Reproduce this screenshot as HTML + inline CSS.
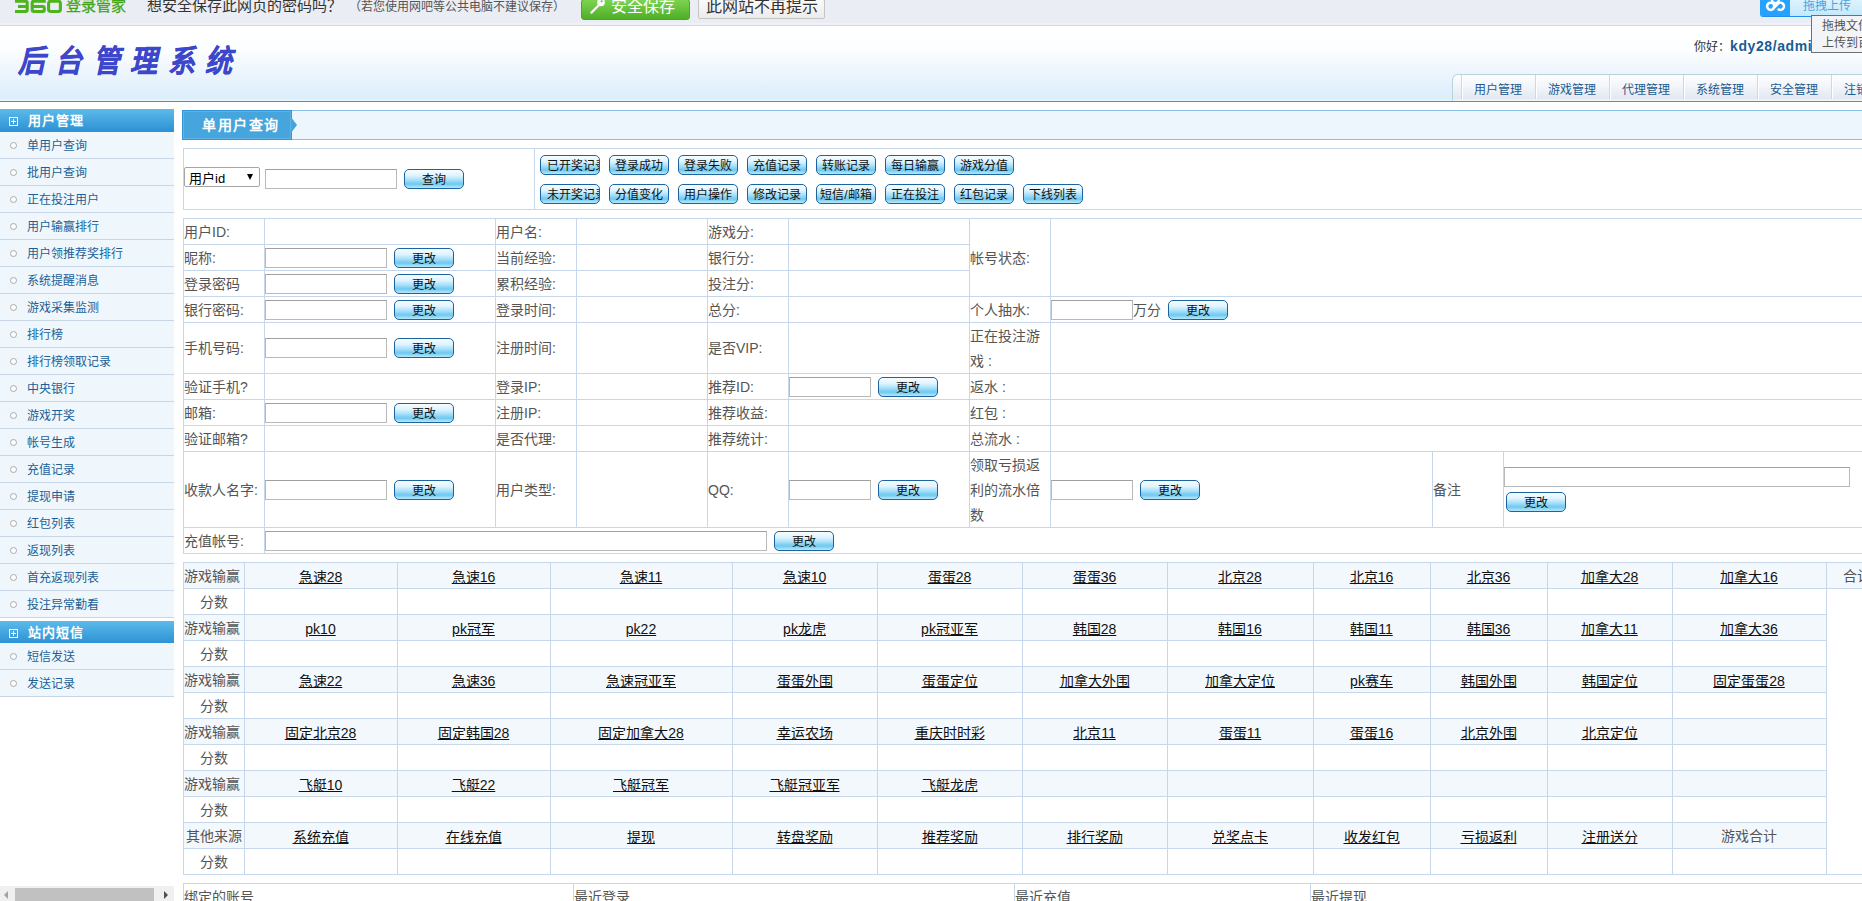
<!DOCTYPE html><html lang="zh-CN"><head><meta charset="utf-8"><style>*{box-sizing:border-box}
html,body{margin:0;padding:0}
body{width:1862px;height:901px;overflow:hidden;position:relative;background:#fff;font-family:"Liberation Sans",sans-serif;font-size:14px;color:#555}
.abs{position:absolute}
#bar{left:0;top:0;width:1862px;height:26px;background:linear-gradient(#eaedf4 0%,#eaedf4 90%,#f0f2f7 92%,#f0f2f7 100%);border-bottom:1px solid #cfd8ea}
#logo360{left:14px;top:-7px;font-size:22px;font-weight:bold;color:#4cb31d;line-height:22px;letter-spacing:-1px}
#logo360b{left:66px;top:-3px;font-size:15px;color:#44a516;line-height:18px;-webkit-text-stroke:0.3px #44a516}
#q1{left:147px;top:-3px;font-size:15px;color:#333;line-height:18px}
#q2{left:349px;top:-1px;font-size:12px;color:#555;line-height:16px}
#gbtn{left:581px;top:-1px;width:109px;height:21px;border-radius:3px;background:linear-gradient(#7dd350,#4fae26);border:1px solid #4ea52c}
#gbtn span{position:absolute;left:29px;top:-3px;font-size:16px;line-height:20px;color:#fff}
#wbtn{left:698px;top:-1px;width:127px;height:20px;border-radius:2px;background:linear-gradient(#fafafa,#ececec);border:1px solid #c4c4c4;font-size:16px;line-height:14px;color:#333;text-align:center;padding-top:0}
#upl{left:1760px;top:-1px;width:110px;height:18px;border-radius:0 0 0 3px;background:linear-gradient(#def3fe,#c3e8fb);border-bottom:1px solid #1e90f5;overflow:hidden}
#uplic{position:absolute;left:0;top:0;width:30px;height:18px;background:#24a2fd}
#upl span{position:absolute;left:43px;top:0px;font-size:12px;line-height:14px;color:#4aa3df}
#tip{z-index:5;left:1811px;top:15px;width:60px;height:38px;background:#f3f4f7;border:1px solid #6f6f6f;font-size:12px;line-height:17px;color:#555;padding:2px 0 0 10px;white-space:nowrap;overflow:hidden}
#hdr{left:0;top:26px;width:1862px;height:76px;background:linear-gradient(#ffffff 0%,#fdfeff 30%,#f0f7fd 55%,#e4f1fc 80%,#dcedfa 97%,#e9f5fc 98.5%);border-bottom:1px solid #3f95d2}
#sys{left:18px;top:42px;font-size:31px;line-height:40px;font-weight:bold;color:#3d47cb;letter-spacing:12px;font-style:italic;-webkit-text-stroke:0.4px #3d47cb;white-space:nowrap;transform:scaleX(0.87);transform-origin:0 0}
#hello{left:1694px;top:38px;font-size:12px;line-height:16px;color:#333;white-space:nowrap}
#hello b{color:#1a5c93;font-size:14px;letter-spacing:0.6px}
#nav{left:1452px;top:74px;width:420px;height:27px;border:1px solid #b9d2dc;border-bottom:none;border-radius:6px 0 0 0;background:linear-gradient(#fdfeff 0%,#f3f6fa 40%,#e3e9f1 90%,#f7f9fc 100%)}
.navt{white-space:nowrap;top:77px;height:26px;line-height:26px;text-align:left;font-size:12px;color:#1d5a8e}
.navs{top:75px;width:2px;height:24px;background:#fff;border-left:1px solid #c9d9ec}
.sbh{position:absolute;left:0;width:174px;height:23px;background:linear-gradient(#5cbbea,#2c90d3);color:#fff;font-weight:bold;font-size:13px;line-height:23px}
.sbh i{position:absolute;left:9px;top:8px;width:9px;height:9px;border:1px solid #fff}
.sbh i:before{content:"";position:absolute;left:1px;top:3px;width:5px;height:1px;background:#fff}
.sbh i:after{content:"";position:absolute;left:3px;top:1px;width:1px;height:5px;background:#fff}
.sbh span{position:absolute;left:28px;top:0;letter-spacing:1px}
.sbi{position:absolute;left:0;width:174px;height:27px;background:#f0f7fc;border-bottom:1px solid #c7d5e7;color:#1a5f98;font-size:12px;line-height:26px}
.sbi i{position:absolute;left:10px;top:10px;width:7px;height:7px;border:1px solid #a9a9a9;border-radius:50%;background:#fff}
.sbi span{position:absolute;left:27px;top:1px}
#hs{left:0;top:886px;width:174px;height:15px;background:#f0f0f0}
#hsth{position:absolute;left:15px;top:2px;width:139px;height:13px;background:#c1c1c1}
#hsl{position:absolute;left:4px;top:5px;width:0;height:0;border-top:4px solid transparent;border-bottom:4px solid transparent;border-right:4px solid #a3a3a3}
#hsr{position:absolute;left:164px;top:5px;width:0;height:0;border-top:4px solid transparent;border-bottom:4px solid transparent;border-left:4px solid #505050}
#cstrip{left:182px;top:110px;width:1680px;height:30px;background:#edf6fd;border-top:1px solid #8cc0e6;border-bottom:1px solid #8cc0e6}
#ctab{left:182px;top:110px;width:110px;height:30px;background:#45a5dc;border:1px solid #3197d6}
#ctab:before{content:"";position:absolute;left:0;top:0;right:0;bottom:0;border:1px solid #5eb2e2}
#ctab span{position:absolute;left:19px;top:5px;line-height:18px;font-size:14px;font-weight:bold;color:#fff;white-space:nowrap;letter-spacing:1.5px}
.btn{position:absolute;height:20px;border:1px solid #1c649f;border-radius:5px;background:linear-gradient(#f6fcff 0%,#dff4fe 30%,#a9e0f9 55%,#6cc9f1 78%,#b8e8fc 100%);color:#111;font-size:12px;line-height:20px;text-align:center;overflow:hidden;white-space:nowrap}
.btn.lg{text-align:left;padding-left:6px}
.inp{position:absolute;height:20px;border:1px solid #b9b9b9;border-top-color:#a0a0a0;background:#fff}
#sel{left:184px;top:167px;width:76px;height:20px;border:1px solid #a6a6a6;border-radius:2px;background:#fff}
#sel span{position:absolute;left:4px;top:2px;line-height:18px;font-size:13px;color:#000}
#sel b{position:absolute;left:62px;top:6px;width:0;height:0;border-left:3.5px solid transparent;border-right:3.5px solid transparent;border-top:6px solid #000}
.hl{position:absolute;height:1px;background:#c7d7eb}
.vl{position:absolute;width:1px;background:#c7d7eb}
.t{position:absolute;white-space:nowrap;line-height:25px;color:#555}
.gbg{background:#f3f8fd}
.gc{position:absolute;height:26px;line-height:26px;padding-top:1px;text-align:center;white-space:nowrap;color:#555}
.gc.u span{color:#111;text-decoration:underline;position:relative;top:1px}
</style></head><body>
<div class="abs" id="bar"></div>
<svg class="abs" style="left:0;top:0" width="70" height="20" viewBox="0 0 70 20"><g fill="none" stroke="#4db41c" stroke-width="3.1" stroke-linejoin="round"><path d="M15 1.2 H25.5 Q27.2 1.2 27.2 3 V9.8 Q27.2 11.5 25.5 11.5 H15 M18 6.5 H27.2"/><path d="M45.8 1.2 H34 Q32.2 1.2 32.2 3 V9.8 Q32.2 11.5 34 11.5 H42.6 Q44.3 11.5 44.3 9.8 V8.2 Q44.3 6.5 42.6 6.5 H32.2"/><rect x="48.6" y="1.2" width="11.8" height="10.3" rx="2.2"/></g></svg>
<div class="abs" id="logo360b">登录管家</div>
<div class="abs" id="q1">想安全保存此网页的密码吗？</div>
<div class="abs" id="q2">（若您使用网吧等公共电脑不建议保存）</div>
<div class="abs" id="gbtn"><svg width="18" height="18" viewBox="0 0 18 18" style="position:absolute;left:7px;top:0px"><circle cx="12" cy="2.4" r="3.8" fill="#fdfdfd"/><circle cx="12.6" cy="1.3" r="1" fill="#62b83a"/><path d="M9.8 5.2 L2.4 12.6" stroke="#f4f4f4" stroke-width="2.3" fill="none" stroke-linecap="round"/></svg><span>安全保存</span></div>
<div class="abs" id="wbtn">此网站不再提示</div>
<div class="abs" id="upl"><div id="uplic"><svg width="30" height="18" viewBox="0 0 30 18"><g fill="none" stroke="#fff" stroke-width="2.5"><circle cx="10.7" cy="7.3" r="3.6"/><path d="M17.85 9.85 A3.6 3.6 0 1 0 17.85 4.75 L12.9 9.9"/><circle cx="15.4" cy="0.6" r="3.5"/></g></svg></div><span>拖拽上传</span></div>
<div class="abs" id="tip"><div>拖拽文件</div><div>上传到百度</div></div>
<div class="abs" id="hdr"></div>
<div class="abs" id="sys">后台管理系统</div>
<div class="abs" id="hello">你好：<b>kdy28/admin</b></div>
<div class="abs" id="nav"></div>
<div class="abs navt" style="left:1474px">用户管理</div>
<div class="abs navt" style="left:1548px">游戏管理</div>
<div class="abs navs" style="left:1535px"></div>
<div class="abs navt" style="left:1622px">代理管理</div>
<div class="abs navs" style="left:1609px"></div>
<div class="abs navt" style="left:1696px">系统管理</div>
<div class="abs navs" style="left:1683px"></div>
<div class="abs navt" style="left:1770px">安全管理</div>
<div class="abs navs" style="left:1757px"></div>
<div class="abs navt" style="left:1844px">注销</div>
<div class="abs navs" style="left:1831px"></div>
<div class="abs navs" style="left:1461px"></div>
<div class="sbh" style="top:109px"><i></i><span>用户管理</span></div>
<div class="sbi" style="top:132px"><i></i><span>单用户查询</span></div>
<div class="sbi" style="top:159px"><i></i><span>批用户查询</span></div>
<div class="sbi" style="top:186px"><i></i><span>正在投注用户</span></div>
<div class="sbi" style="top:213px"><i></i><span>用户输赢排行</span></div>
<div class="sbi" style="top:240px"><i></i><span>用户领推荐奖排行</span></div>
<div class="sbi" style="top:267px"><i></i><span>系统提醒消息</span></div>
<div class="sbi" style="top:294px"><i></i><span>游戏采集监测</span></div>
<div class="sbi" style="top:321px"><i></i><span>排行榜</span></div>
<div class="sbi" style="top:348px"><i></i><span>排行榜领取记录</span></div>
<div class="sbi" style="top:375px"><i></i><span>中央银行</span></div>
<div class="sbi" style="top:402px"><i></i><span>游戏开奖</span></div>
<div class="sbi" style="top:429px"><i></i><span>帐号生成</span></div>
<div class="sbi" style="top:456px"><i></i><span>充值记录</span></div>
<div class="sbi" style="top:483px"><i></i><span>提现申请</span></div>
<div class="sbi" style="top:510px"><i></i><span>红包列表</span></div>
<div class="sbi" style="top:537px"><i></i><span>返现列表</span></div>
<div class="sbi" style="top:564px"><i></i><span>首充返现列表</span></div>
<div class="sbi" style="top:591px"><i></i><span>投注异常勤看</span></div>
<div class="sbh" style="top:621px"><i></i><span>站内短信</span></div>
<div class="sbi" style="top:643px"><i></i><span>短信发送</span></div>
<div class="sbi" style="top:670px"><i></i><span>发送记录</span></div>
<div class="abs" id="hs"><div id="hsth"></div><div id="hsl"></div><div id="hsr"></div></div>
<div class="abs" id="cstrip"></div>
<div class="abs" id="ctab"><span>单用户查询</span></div>
<svg class="abs" style="left:291px;top:111px" width="8" height="28" viewBox="0 0 8 28"><path d="M0 6 L6 14 L0 22 Z" fill="#45a5dc"/></svg>
<div class="hl" style="left:183px;top:148px;width:1680px"></div>
<div class="hl" style="left:183px;top:209px;width:1680px"></div>
<div class="vl" style="left:183px;top:148px;height:62px"></div>
<div class="vl" style="left:534px;top:148px;height:62px"></div>
<div class="abs" id="sel"><span>用户id</span><b></b></div>
<div class="inp" style="left:265px;top:169px;width:132px;height:20px"></div>
<div class="btn" style="left:404px;top:169px;width:60px;height:20px">查询</div>
<div class="btn lg" style="left:540px;top:155px;width:60px;height:20px">已开奖记录</div>
<div class="btn" style="left:609px;top:155px;width:60px;height:20px">登录成功</div>
<div class="btn" style="left:678px;top:155px;width:60px;height:20px">登录失败</div>
<div class="btn" style="left:747px;top:155px;width:60px;height:20px">充值记录</div>
<div class="btn" style="left:816px;top:155px;width:60px;height:20px">转账记录</div>
<div class="btn" style="left:885px;top:155px;width:60px;height:20px">每日输赢</div>
<div class="btn" style="left:954px;top:155px;width:60px;height:20px">游戏分值</div>
<div class="btn lg" style="left:540px;top:184px;width:60px;height:20px">未开奖记录</div>
<div class="btn" style="left:609px;top:184px;width:60px;height:20px">分值变化</div>
<div class="btn" style="left:678px;top:184px;width:60px;height:20px">用户操作</div>
<div class="btn" style="left:747px;top:184px;width:60px;height:20px">修改记录</div>
<div class="btn" style="left:816px;top:184px;width:60px;height:20px">短信/邮箱</div>
<div class="btn" style="left:885px;top:184px;width:60px;height:20px">正在投注</div>
<div class="btn" style="left:954px;top:184px;width:60px;height:20px">红包记录</div>
<div class="btn" style="left:1023px;top:184px;width:60px;height:20px">下线列表</div>
<div class="hl" style="left:183px;top:218px;width:1680px"></div>
<div class="hl" style="left:183px;top:244px;width:787px"></div>
<div class="hl" style="left:183px;top:270px;width:787px"></div>
<div class="hl" style="left:183px;top:296px;width:1680px"></div>
<div class="hl" style="left:183px;top:322px;width:1680px"></div>
<div class="hl" style="left:183px;top:373px;width:1680px"></div>
<div class="hl" style="left:183px;top:399px;width:1680px"></div>
<div class="hl" style="left:183px;top:425px;width:1680px"></div>
<div class="hl" style="left:183px;top:451px;width:1680px"></div>
<div class="hl" style="left:183px;top:527px;width:1680px"></div>
<div class="hl" style="left:183px;top:553px;width:1680px"></div>
<div class="vl" style="left:183px;top:218px;height:310px"></div>
<div class="vl" style="left:264px;top:218px;height:310px"></div>
<div class="vl" style="left:495px;top:218px;height:310px"></div>
<div class="vl" style="left:576px;top:218px;height:310px"></div>
<div class="vl" style="left:707px;top:218px;height:310px"></div>
<div class="vl" style="left:788px;top:218px;height:310px"></div>
<div class="vl" style="left:969px;top:218px;height:310px"></div>
<div class="vl" style="left:1050px;top:218px;height:310px"></div>
<div class="vl" style="left:1432px;top:451px;height:77px"></div>
<div class="vl" style="left:1503px;top:451px;height:77px"></div>
<div class="vl" style="left:183px;top:527px;height:27px"></div>
<div class="vl" style="left:264px;top:527px;height:27px"></div>
<div class="t" style="left:184px;top:220px;">用户ID:</div>
<div class="t" style="left:496px;top:220px;">用户名:</div>
<div class="t" style="left:708px;top:220px;">游戏分:</div>
<div class="t" style="left:184px;top:246px;">昵称:</div>
<div class="t" style="left:496px;top:246px;">当前经验:</div>
<div class="t" style="left:708px;top:246px;">银行分:</div>
<div class="t" style="left:184px;top:272px;">登录密码</div>
<div class="t" style="left:496px;top:272px;">累积经验:</div>
<div class="t" style="left:708px;top:272px;">投注分:</div>
<div class="t" style="left:184px;top:298px;">银行密码:</div>
<div class="t" style="left:496px;top:298px;">登录时间:</div>
<div class="t" style="left:708px;top:298px;">总分:</div>
<div class="t" style="left:184px;top:336px;">手机号码:</div>
<div class="t" style="left:496px;top:336px;">注册时间:</div>
<div class="t" style="left:708px;top:336px;">是否VIP:</div>
<div class="t" style="left:184px;top:375px;">验证手机?</div>
<div class="t" style="left:496px;top:375px;">登录IP:</div>
<div class="t" style="left:708px;top:375px;">推荐ID:</div>
<div class="t" style="left:184px;top:401px;">邮箱:</div>
<div class="t" style="left:496px;top:401px;">注册IP:</div>
<div class="t" style="left:708px;top:401px;">推荐收益:</div>
<div class="t" style="left:184px;top:427px;">验证邮箱?</div>
<div class="t" style="left:496px;top:427px;">是否代理:</div>
<div class="t" style="left:708px;top:427px;">推荐统计:</div>
<div class="t" style="left:184px;top:478px;">收款人名字:</div>
<div class="t" style="left:496px;top:478px;">用户类型:</div>
<div class="t" style="left:708px;top:478px;">QQ:</div>
<div class="t" style="left:184px;top:529px;">充值帐号:</div>
<div class="t" style="left:970px;top:246px;">帐号状态:</div>
<div class="t" style="left:970px;top:298px;">个人抽水:</div>
<div class="t" style="left:970px;top:324px;line-height:25px">正在投注游<br>戏&nbsp;:</div>
<div class="t" style="left:970px;top:375px;">返水&nbsp;:</div>
<div class="t" style="left:970px;top:401px;">红包&nbsp;:</div>
<div class="t" style="left:970px;top:427px;">总流水&nbsp;:</div>
<div class="t" style="left:970px;top:453px;line-height:25px">领取亏损返<br>利的流水倍<br>数</div>
<div class="t" style="left:1433px;top:478px;">备注</div>
<div class="inp" style="left:265px;top:248px;width:122px;height:20px"></div>
<div class="btn" style="left:394px;top:248px;width:60px;height:20px">更改</div>
<div class="inp" style="left:265px;top:274px;width:122px;height:20px"></div>
<div class="btn" style="left:394px;top:274px;width:60px;height:20px">更改</div>
<div class="inp" style="left:265px;top:300px;width:122px;height:20px"></div>
<div class="btn" style="left:394px;top:300px;width:60px;height:20px">更改</div>
<div class="inp" style="left:265px;top:338px;width:122px;height:20px"></div>
<div class="btn" style="left:394px;top:338px;width:60px;height:20px">更改</div>
<div class="inp" style="left:265px;top:403px;width:122px;height:20px"></div>
<div class="btn" style="left:394px;top:403px;width:60px;height:20px">更改</div>
<div class="inp" style="left:265px;top:480px;width:122px;height:20px"></div>
<div class="btn" style="left:394px;top:480px;width:60px;height:20px">更改</div>
<div class="inp" style="left:1051px;top:300px;width:82px;height:20px"></div>
<div class="t" style="left:1133px;top:298px;">万分</div>
<div class="btn" style="left:1168px;top:300px;width:60px;height:20px">更改</div>
<div class="inp" style="left:789px;top:377px;width:82px;height:20px"></div>
<div class="btn" style="left:878px;top:377px;width:60px;height:20px">更改</div>
<div class="inp" style="left:789px;top:480px;width:82px;height:20px"></div>
<div class="btn" style="left:878px;top:480px;width:60px;height:20px">更改</div>
<div class="inp" style="left:1051px;top:480px;width:82px;height:20px"></div>
<div class="btn" style="left:1140px;top:480px;width:60px;height:20px">更改</div>
<div class="inp" style="left:1504px;top:467px;width:346px;height:20px"></div>
<div class="btn" style="left:1506px;top:492px;width:60px;height:20px">更改</div>
<div class="inp" style="left:265px;top:531px;width:502px;height:20px"></div>
<div class="btn" style="left:774px;top:531px;width:60px;height:20px">更改</div>
<div class="abs gbg" style="left:184px;top:563px;width:1642px;height:25px"></div>
<div class="abs gbg" style="left:184px;top:615px;width:1642px;height:25px"></div>
<div class="abs gbg" style="left:184px;top:667px;width:1642px;height:25px"></div>
<div class="abs gbg" style="left:184px;top:719px;width:1642px;height:25px"></div>
<div class="abs gbg" style="left:184px;top:771px;width:1642px;height:25px"></div>
<div class="abs gbg" style="left:184px;top:823px;width:1642px;height:25px"></div>
<div class="abs gbg" style="left:1827px;top:563px;width:35px;height:25px"></div>
<div class="hl" style="left:183px;top:562px;width:1680px"></div>
<div class="hl" style="left:183px;top:588px;width:1680px"></div>
<div class="hl" style="left:183px;top:614px;width:1644px"></div>
<div class="hl" style="left:183px;top:640px;width:1644px"></div>
<div class="hl" style="left:183px;top:666px;width:1644px"></div>
<div class="hl" style="left:183px;top:692px;width:1644px"></div>
<div class="hl" style="left:183px;top:718px;width:1644px"></div>
<div class="hl" style="left:183px;top:744px;width:1644px"></div>
<div class="hl" style="left:183px;top:770px;width:1644px"></div>
<div class="hl" style="left:183px;top:796px;width:1644px"></div>
<div class="hl" style="left:183px;top:822px;width:1644px"></div>
<div class="hl" style="left:183px;top:848px;width:1644px"></div>
<div class="hl" style="left:183px;top:874px;width:1680px"></div>
<div class="vl" style="left:183px;top:562px;height:313px"></div>
<div class="vl" style="left:244px;top:562px;height:313px"></div>
<div class="vl" style="left:397px;top:562px;height:313px"></div>
<div class="vl" style="left:550px;top:562px;height:313px"></div>
<div class="vl" style="left:732px;top:562px;height:313px"></div>
<div class="vl" style="left:877px;top:562px;height:313px"></div>
<div class="vl" style="left:1022px;top:562px;height:313px"></div>
<div class="vl" style="left:1167px;top:562px;height:313px"></div>
<div class="vl" style="left:1313px;top:562px;height:313px"></div>
<div class="vl" style="left:1430px;top:562px;height:313px"></div>
<div class="vl" style="left:1547px;top:562px;height:313px"></div>
<div class="vl" style="left:1672px;top:562px;height:313px"></div>
<div class="vl" style="left:1826px;top:562px;height:313px"></div>
<div class="gc" style="left:181px;top:562px;width:61px">游戏输赢</div>
<div class="gc" style="left:183px;top:588px;width:61px">分数</div>
<div class="gc u" style="left:244px;top:562px;width:153px"><span>急速28</span></div>
<div class="gc u" style="left:397px;top:562px;width:153px"><span>急速16</span></div>
<div class="gc u" style="left:550px;top:562px;width:182px"><span>急速11</span></div>
<div class="gc u" style="left:732px;top:562px;width:145px"><span>急速10</span></div>
<div class="gc u" style="left:877px;top:562px;width:145px"><span>蛋蛋28</span></div>
<div class="gc u" style="left:1022px;top:562px;width:145px"><span>蛋蛋36</span></div>
<div class="gc u" style="left:1167px;top:562px;width:146px"><span>北京28</span></div>
<div class="gc u" style="left:1313px;top:562px;width:117px"><span>北京16</span></div>
<div class="gc u" style="left:1430px;top:562px;width:117px"><span>北京36</span></div>
<div class="gc u" style="left:1547px;top:562px;width:125px"><span>加拿大28</span></div>
<div class="gc u" style="left:1672px;top:562px;width:154px"><span>加拿大16</span></div>
<div class="gc" style="left:181px;top:614px;width:61px">游戏输赢</div>
<div class="gc" style="left:183px;top:640px;width:61px">分数</div>
<div class="gc u" style="left:244px;top:614px;width:153px"><span>pk10</span></div>
<div class="gc u" style="left:397px;top:614px;width:153px"><span>pk冠军</span></div>
<div class="gc u" style="left:550px;top:614px;width:182px"><span>pk22</span></div>
<div class="gc u" style="left:732px;top:614px;width:145px"><span>pk龙虎</span></div>
<div class="gc u" style="left:877px;top:614px;width:145px"><span>pk冠亚军</span></div>
<div class="gc u" style="left:1022px;top:614px;width:145px"><span>韩国28</span></div>
<div class="gc u" style="left:1167px;top:614px;width:146px"><span>韩国16</span></div>
<div class="gc u" style="left:1313px;top:614px;width:117px"><span>韩国11</span></div>
<div class="gc u" style="left:1430px;top:614px;width:117px"><span>韩国36</span></div>
<div class="gc u" style="left:1547px;top:614px;width:125px"><span>加拿大11</span></div>
<div class="gc u" style="left:1672px;top:614px;width:154px"><span>加拿大36</span></div>
<div class="gc" style="left:181px;top:666px;width:61px">游戏输赢</div>
<div class="gc" style="left:183px;top:692px;width:61px">分数</div>
<div class="gc u" style="left:244px;top:666px;width:153px"><span>急速22</span></div>
<div class="gc u" style="left:397px;top:666px;width:153px"><span>急速36</span></div>
<div class="gc u" style="left:550px;top:666px;width:182px"><span>急速冠亚军</span></div>
<div class="gc u" style="left:732px;top:666px;width:145px"><span>蛋蛋外围</span></div>
<div class="gc u" style="left:877px;top:666px;width:145px"><span>蛋蛋定位</span></div>
<div class="gc u" style="left:1022px;top:666px;width:145px"><span>加拿大外围</span></div>
<div class="gc u" style="left:1167px;top:666px;width:146px"><span>加拿大定位</span></div>
<div class="gc u" style="left:1313px;top:666px;width:117px"><span>pk赛车</span></div>
<div class="gc u" style="left:1430px;top:666px;width:117px"><span>韩国外围</span></div>
<div class="gc u" style="left:1547px;top:666px;width:125px"><span>韩国定位</span></div>
<div class="gc u" style="left:1672px;top:666px;width:154px"><span>固定蛋蛋28</span></div>
<div class="gc" style="left:181px;top:718px;width:61px">游戏输赢</div>
<div class="gc" style="left:183px;top:744px;width:61px">分数</div>
<div class="gc u" style="left:244px;top:718px;width:153px"><span>固定北京28</span></div>
<div class="gc u" style="left:397px;top:718px;width:153px"><span>固定韩国28</span></div>
<div class="gc u" style="left:550px;top:718px;width:182px"><span>固定加拿大28</span></div>
<div class="gc u" style="left:732px;top:718px;width:145px"><span>幸运农场</span></div>
<div class="gc u" style="left:877px;top:718px;width:145px"><span>重庆时时彩</span></div>
<div class="gc u" style="left:1022px;top:718px;width:145px"><span>北京11</span></div>
<div class="gc u" style="left:1167px;top:718px;width:146px"><span>蛋蛋11</span></div>
<div class="gc u" style="left:1313px;top:718px;width:117px"><span>蛋蛋16</span></div>
<div class="gc u" style="left:1430px;top:718px;width:117px"><span>北京外围</span></div>
<div class="gc u" style="left:1547px;top:718px;width:125px"><span>北京定位</span></div>
<div class="gc" style="left:181px;top:770px;width:61px">游戏输赢</div>
<div class="gc" style="left:183px;top:796px;width:61px">分数</div>
<div class="gc u" style="left:244px;top:770px;width:153px"><span>飞艇10</span></div>
<div class="gc u" style="left:397px;top:770px;width:153px"><span>飞艇22</span></div>
<div class="gc u" style="left:550px;top:770px;width:182px"><span>飞艇冠军</span></div>
<div class="gc u" style="left:732px;top:770px;width:145px"><span>飞艇冠亚军</span></div>
<div class="gc u" style="left:877px;top:770px;width:145px"><span>飞艇龙虎</span></div>
<div class="gc" style="left:183px;top:822px;width:61px">其他来源</div>
<div class="gc" style="left:183px;top:848px;width:61px">分数</div>
<div class="gc u" style="left:244px;top:822px;width:153px"><span>系统充值</span></div>
<div class="gc u" style="left:397px;top:822px;width:153px"><span>在线充值</span></div>
<div class="gc u" style="left:550px;top:822px;width:182px"><span>提现</span></div>
<div class="gc u" style="left:732px;top:822px;width:145px"><span>转盘奖励</span></div>
<div class="gc u" style="left:877px;top:822px;width:145px"><span>推荐奖励</span></div>
<div class="gc u" style="left:1022px;top:822px;width:145px"><span>排行奖励</span></div>
<div class="gc u" style="left:1167px;top:822px;width:146px"><span>兑奖点卡</span></div>
<div class="gc u" style="left:1313px;top:822px;width:117px"><span>收发红包</span></div>
<div class="gc u" style="left:1430px;top:822px;width:117px"><span>亏损返利</span></div>
<div class="gc u" style="left:1547px;top:822px;width:125px"><span>注册送分</span></div>
<div class="gc" style="left:1672px;top:822px;width:154px"><span>游戏合计</span></div>
<div class="gc" style="left:1843px;top:562px;width:60px;text-align:left">合计</div>
<div class="hl" style="left:183px;top:883px;width:1680px"></div>
<div class="vl" style="left:183px;top:883px;height:19px"></div>
<div class="vl" style="left:573px;top:883px;height:19px"></div>
<div class="vl" style="left:1014px;top:883px;height:19px"></div>
<div class="vl" style="left:1310px;top:883px;height:19px"></div>
<div class="t" style="left:184px;top:885px;">绑定的账号</div>
<div class="t" style="left:574px;top:885px;">最近登录</div>
<div class="t" style="left:1015px;top:885px;">最近充值</div>
<div class="t" style="left:1311px;top:885px;">最近提现</div>
</body></html>
